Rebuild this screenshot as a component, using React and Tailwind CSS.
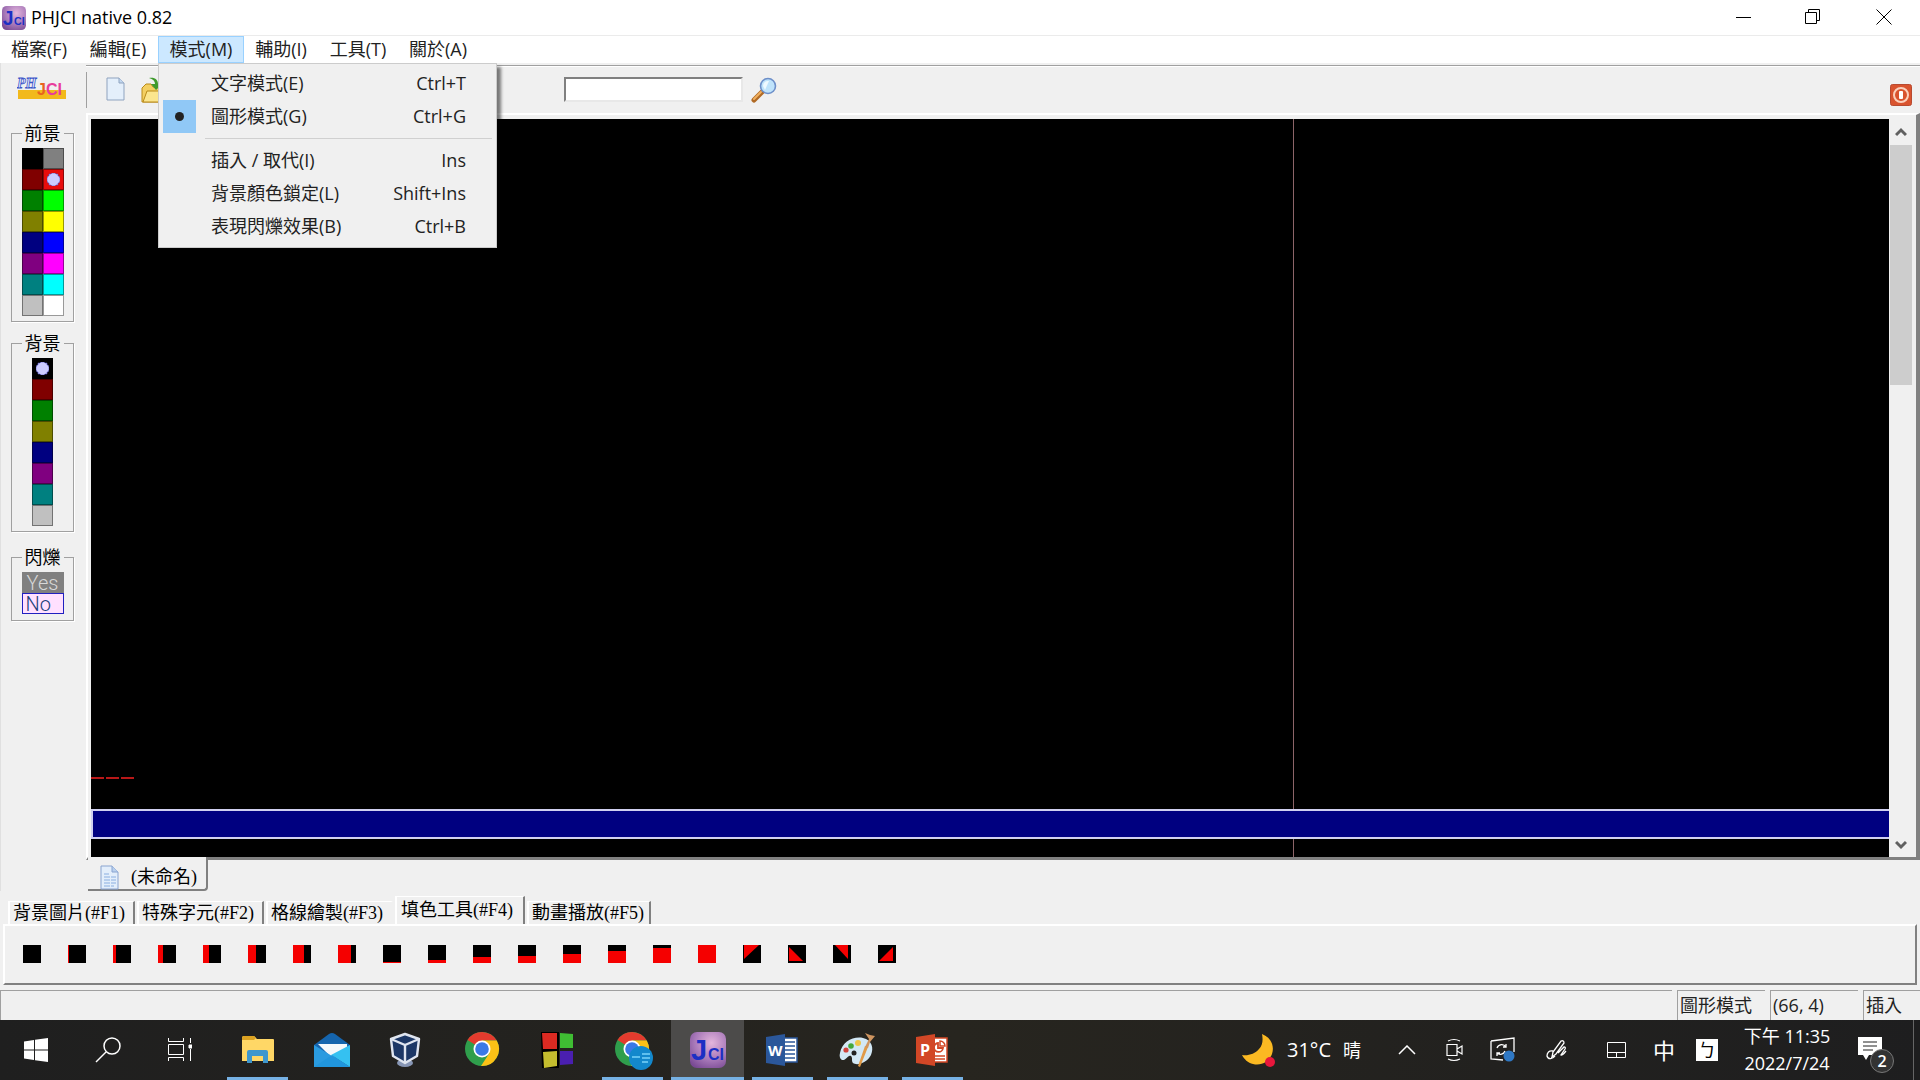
import { useState } from "react";

const MENUS = [
  { label: "檔案(F)", width: "w-[78px]" },
  { label: "編輯(E)", width: "w-20" },
  { label: "模式(M)", width: "w-[86px]" },
  { label: "輔助(I)", width: "w-[74px]" },
  { label: "工具(T)", width: "w-20" },
  { label: "關於(A)", width: "w-20" },
];

const MODE_ITEMS = [
  { label: "文字模式(E)", keys: "Ctrl+T" },
  { label: "圖形模式(G)", keys: "Ctrl+G", checked: true },
  null,
  { label: "插入 / 取代(I)", keys: "Ins" },
  { label: "背景顏色鎖定(L)", keys: "Shift+Ins" },
  { label: "表現閃爍效果(B)", keys: "Ctrl+B" },
];

const FOREGROUND = [
  "#000000", "#808080",
  "#800000", "#e80c0c",
  "#008000", "#00ff00",
  "#808000", "#ffff00",
  "#000080", "#0000ff",
  "#800080", "#ff00ff",
  "#008080", "#00ffff",
  "#c0c0c0", "#ffffff",
];

const BACKGROUND = [
  "#000000", "#800000", "#008000", "#808000",
  "#000080", "#800080", "#008080", "#c0c0c0",
];

// red area of every 18x18 fill block
const FILLS = [
  "",
  "M0 0h1v18h-1z",
  "M0 0h3v18h-3z",
  "M0 0h5v18h-5z",
  "M0 0h6v18h-6z",
  "M0 0h8v18h-8z",
  "M0 0h11v18h-11z",
  "M0 0h13v18h-13z",
  "M0 17h18v1h-18z",
  "M0 15h18v3h-18z",
  "M0 12h18v6h-18z",
  "M0 11h18v7h-18z",
  "M0 9h18v9h-18z",
  "M0 6h18v12h-18z",
  "M0 3h18v15h-18z",
  "M0 0h18v18h-18z",
  "M1 0H16L1 14z",
  "M1 2L15 16H1z",
  "M2 0H15V14z",
  "M15 2V16H1z",
];

const TABS = [
  { label: "背景圖片(#F1)", width: "w-[127px]" },
  { label: "特殊字元(#F2)", width: "w-[127px]" },
  { label: "格線繪製(#F3)", width: "w-[127px]" },
  { label: "填色工具(#F4)", width: "w-[130px]" },
  { label: "動畫播放(#F5)", width: "w-[124px]" },
];

const JciIcon = ({ size }) => (
  <svg width={size} height={size} viewBox="0 0 36 36" aria-hidden="true">
    <defs>
      <radialGradient id="jci" cx="0.6" cy="0.3" r="0.8">
        <stop offset="0" stopColor="#e3b5dc" />
        <stop offset="0.6" stopColor="#a778b8" />
        <stop offset="1" stopColor="#7a4a94" />
      </radialGradient>
    </defs>
    <rect width="36" height="36" rx="7" fill="url(#jci)" />
    <text x="1" y="28" fontFamily="Liberation Sans, sans-serif" fontWeight="700" fontSize="29" fill="#1c2fc4">J</text>
    <text x="18" y="28" fontFamily="Liberation Sans, sans-serif" fontWeight="700" fontSize="16" fill="#1c2fc4">CI</text>
  </svg>
);

const Logo = () => (
  <svg width="50" height="28" viewBox="0 0 50 28" role="img" aria-label="PHJCI">
    <rect x="1" y="15" width="48" height="9" fill="#f2b91c" />
    <text x="0" y="13" fontFamily="Liberation Serif, serif" fontStyle="italic" fontWeight="700" fontSize="14" fill="#eef2ff" stroke="#3b55c8" strokeWidth="0.8">PH</text>
    <text x="20" y="20" fontFamily="Liberation Sans, sans-serif" fontWeight="700" fontSize="16" fill="#e8641e">J</text>
    <text x="29" y="20" fontFamily="Liberation Sans, sans-serif" fontWeight="700" fontSize="16" fill="#e83c9c">CI</text>
  </svg>
);

const NewFileIcon = () => (
  <svg width="20" height="25" viewBox="0 0 20 25" aria-hidden="true">
    <path d="M1 1h12l5 5v17H1z" fill="#e4effb" stroke="#8fa3bf" />
    <path d="M13 1v5h5" fill="#c3d8f0" stroke="#8fa3bf" />
  </svg>
);

const OpenIcon = () => (
  <svg width="24" height="26" viewBox="0 0 24 26" aria-hidden="true">
    <path d="M2 11l4-4h5l2 3h8v15H2z" fill="#f3cf62" stroke="#b98a18" />
    <path d="M3 25l4-11h17l-3 11z" fill="#fbe58e" stroke="#b98a18" />
    <path d="M9 1c6-1 9 2 9 6h4l-6 6-5-6h4c0-3-2-5-6-6z" fill="#3f9a2c" />
  </svg>
);

const SearchIcon = () => (
  <svg width="26" height="26" viewBox="0 0 26 26" aria-hidden="true">
    <path d="M3 23l8-8" stroke="#b06a25" strokeWidth="5" strokeLinecap="round" />
    <path d="M3 22l7-7" stroke="#f0b060" strokeWidth="2" strokeLinecap="round" />
    <circle cx="17" cy="9" r="7.5" fill="#bfe3fb" stroke="#6d8fc9" strokeWidth="1.6" />
    <path d="M12 9a5 5 0 0 1 6-5l-4 9z" fill="#eef9ff" />
  </svg>
);

const DocIcon = () => (
  <svg width="20" height="25" viewBox="0 0 20 25" aria-hidden="true">
    <path d="M1 1h11l6 6v17H1z" fill="#e3eefb" stroke="#8aa4d0" />
    <path d="M12 1v6h6" fill="#b9d0ee" stroke="#8aa4d0" />
    <path d="M4 9h5M4 12h12M4 15h12M4 18h12M4 21h10" stroke="#8aaee0" strokeDasharray="6 1" />
  </svg>
);

const Marker = () => (
  <svg width="13" height="13" viewBox="0 0 13 13" className="mx-auto block" aria-hidden="true">
    <path
      d="M5 0h3l1 1h2v2h1l1 2v3l-1 2h-1v2H9l-1 1H5l-1-1H2v-2H1L0 8V5l1-2h1V1h2z"
      fill="#ccccff"
      stroke="#5050c0"
      strokeWidth="0.6"
    />
  </svg>
);

const Swatches = ({ colors, columns, value, onPick, name }) => (
  <div className={columns === 2 ? "grid grid-cols-2 w-[42px]" : "grid grid-cols-1 w-[21px]"}>
    {colors.map((color, index) => (
      <button
        type="button"
        key={color}
        aria-label={`${name} ${color}`}
        aria-pressed={value === index}
        onClick={() => onPick(index)}
        className="h-[21px] border border-black/40"
        style={{ backgroundColor: color }}
      >
        {value === index && <Marker />}
      </button>
    ))}
  </div>
);

const Group = ({ title, children, className }) => (
  <fieldset
    className={`mx-[10px] w-[63px] border border-[#a0a0a0] flex flex-col items-center shadow-[1px_1px_0_#fff] ${className}`}
  >
    <legend className="mx-auto px-[3px] text-lg leading-6">{title}</legend>
    {children}
  </fieldset>
);

const ModeMenu = () => (
  <ul
    role="menu"
    className="absolute left-0 top-[27px] z-10 w-[339px] border border-[#cccccc] bg-[#f0f0f0] pb-1 pl-1 pr-1 pt-[3px] shadow-[4px_4px_3px_rgba(0,0,0,0.5)]"
  >
    {MODE_ITEMS.map((item, index) =>
      item ? (
        <li key={item.label} role="none">
          <button type="button" role="menuitem" className="flex h-[33px] w-full items-center text-left">
            <span className={`flex size-[33px] items-center justify-center ${item.checked ? "bg-[#90c8f6]" : ""}`}>
              {item.checked && <span className="size-[9px] rounded-full bg-[#222]" />}
            </span>
            <span className="ml-[15px] flex-1 pb-0.5">{item.label}</span>
            <span className="pb-0.5 pr-[26px]">{item.keys}</span>
          </button>
        </li>
      ) : (
        <li key={index} role="separator" className="ml-[42px] flex h-[11px] items-center">
          <span className="h-px w-full bg-[#d0d0d0]" />
        </li>
      )
    )}
  </ul>
);

const TitleBar = () => (
  <header className="flex h-9 items-center border-b border-[#ebebeb] bg-white pl-0.5">
    <JciIcon size={24} />
    <h1 className="ml-[5px] flex-1 pb-0.5 text-lg leading-6">PHJCI native 0.82</h1>
    <button type="button" aria-label="最小化" className="flex h-full w-[69px] items-center justify-center">
      <svg width="16" height="16" stroke="#000" fill="none"><path d="M0 7.5h15" /></svg>
    </button>
    <button type="button" aria-label="還原" className="flex h-full w-[69px] items-center justify-center pb-0.5">
      <svg width="16" height="16" stroke="#000" fill="none">
        <path d="M0.5 3.5h11v11h-11zM3.5 3.5v-3h11v11h-3" />
      </svg>
    </button>
    <button type="button" aria-label="關閉" className="flex h-full w-[73px] items-center justify-center pb-0.5">
      <svg width="16" height="16" stroke="#000" fill="none"><path d="M0.5 0.5l15 15M15.5 0.5l-15 15" /></svg>
    </button>
  </header>
);

const ChromeIcon = ({ children }) => (
  <svg width="40" height="40" viewBox="0 0 40 40" aria-hidden="true">
    <circle cx="19" cy="19" r="17" fill="#2f9e4c" />
    <path d="M19 19L4.500 10A17 17 0 0 1 33.700 10.500H19z" fill="#e33b2e" />
    <path d="M19 10.500H33.700A17 17 0 0 1 18 36L26.500 23z" fill="#fbc116" />
    <circle cx="19" cy="19" r="8.500" fill="#fff" />
    <circle cx="19" cy="19" r="6.800" fill="#3a79e6" />
    {children}
  </svg>
);

const APPS = [
  {
    name: "檔案總管",
    open: true,
    icon: (
      <svg width="34" height="30" viewBox="0 0 34 30" aria-hidden="true">
        <path d="M1 3q0-2 2-2h10l3 3H32q1 0 1 1v21H1z" fill="#ffd766" />
        <path d="M1 3q0-2 2-2h10l2 2-2 2H1z" fill="#dda322" />
        <path d="M6 28V17q0-2 2-2h17q2 0 2 2v11h-5v-7H11v7z" fill="#3f97cd" />
      </svg>
    ),
  },
  {
    name: "郵件",
    icon: (
      <svg width="38" height="34" viewBox="0 0 38 34" aria-hidden="true">
        <path d="M0 12L15 1q3-2 6 0l15 11v10H0z" fill="#1565ae" />
        <path d="M4 11h29v10L18 25z" fill="#f4f8fb" />
        <path d="M0 12l36 22H0z" fill="#2a9be0" />
        <path d="M36 12v22L17 22z" fill="#35c1f1" />
        <path d="M0 34h36L18 22z" fill="#2196dd" />
      </svg>
    ),
  },
  {
    name: "VirtualBox",
    icon: (
      <svg width="38" height="36" viewBox="0 0 38 36" aria-hidden="true">
        <ellipse cx="16" cy="31" rx="8" ry="4" fill="#8796b5" />
        <path d="M2 7l14-5 14 5-2 17-12 7-12-7z" fill="#1c3766" stroke="#dfe5f0" strokeWidth="2.400" strokeLinejoin="round" />
        <path d="M2 7l14 6 14-6M16 13v18" fill="none" stroke="#dfe5f0" strokeWidth="2.400" />
      </svg>
    ),
  },
  { name: "Google Chrome", icon: <ChromeIcon /> },
  {
    name: "方塊",
    icon: (
      <svg width="34" height="36" viewBox="0 0 34 36" aria-hidden="true">
        <path d="M0 0h18v37H1z" fill="#000" />
        <path d="M1 1h15v16H2z" fill="#dc2a22" />
        <path d="M19 1l13 1v14H19z" fill="#3fbd33" />
        <path d="M2 20l14-1v15l-13 2z" fill="#c4bd2e" />
        <path d="M19 19h13v13l-13 1z" fill="#4a1fb0" />
      </svg>
    ),
  },
  {
    name: "Chrome 設定檔",
    open: true,
    icon: (
      <ChromeIcon>
        <circle cx="28" cy="28" r="12" fill="#1388cc" />
        <path d="M19 27h8M29 24h8M29 28h8M29 32h6" stroke="#5fc0ee" strokeWidth="2" />
      </ChromeIcon>
    ),
  },
  { name: "PHJCI", open: true, active: true, icon: <JciIcon size={36} /> },
  {
    name: "Word",
    open: true,
    icon: (
      <svg width="36" height="32" viewBox="0 0 36 32" aria-hidden="true">
        <path d="M18 4h14v24H18z" fill="#fff" stroke="#2b579a" strokeWidth="1.500" />
        <path d="M20 8h10M20 12h10M20 16h10M20 20h10M20 24h10" stroke="#2b579a" strokeWidth="1.500" />
        <path d="M1 3l19-3v32L1 29z" fill="#2b579a" />
        <text x="3" y="22" fontFamily="Open Sans, sans-serif" fontWeight="700" fontSize="15" fill="#fff">W</text>
      </svg>
    ),
  },
  {
    name: "小畫家",
    open: true,
    icon: (
      <svg width="38" height="36" viewBox="0 0 38 36" aria-hidden="true">
        <path d="M1 21C3 10 14 4 24 6c9 2 11 10 8 17-4 8-14 11-18 8-2-2 0-5-2-7-3-2-5 5-9 4-2-1-3-4-2-7z" fill="#d3e8f5" />
        <circle cx="7" cy="18" r="2.600" fill="#d0443c" />
        <circle cx="12" cy="14" r="2.800" fill="#44a83c" />
        <circle cx="19" cy="11" r="3" fill="#eec64a" />
        <circle cx="15" cy="21" r="2.500" fill="#222" />
        <path d="M19 34l7-20 3 1-8 20z" fill="#e09a48" />
        <path d="M26 15l4-8-4-6 5 2 5 1-5 6-2 6z" fill="#cf9560" />
      </svg>
    ),
  },
  {
    name: "PowerPoint",
    open: true,
    icon: (
      <svg width="36" height="32" viewBox="0 0 36 32" aria-hidden="true">
        <path d="M18 4h14v24H18z" fill="#fff" stroke="#d24726" strokeWidth="1.500" />
        <path d="M20 22h10M20 25h10" stroke="#d24726" strokeWidth="1.500" />
        <path d="M23 9a4.500 4.500 0 1 0 5 5h-5z" fill="none" stroke="#d24726" strokeWidth="1.800" />
        <path d="M25 7a5 5 0 0 1 5 5h-5z" fill="none" stroke="#d24726" strokeWidth="1.500" />
        <path d="M1 3l19-3v32L1 29z" fill="#d24726" />
        <text x="5" y="22" fontFamily="Open Sans, sans-serif" fontWeight="700" fontSize="16" fill="#fff">P</text>
      </svg>
    ),
  },
];

const TrayButton = ({ label, width, children }) => (
  <button type="button" aria-label={label} className={`flex h-full items-center justify-center ${width}`}>
    {children}
  </button>
);

const Taskbar = () => (
  <footer className="flex h-[60px] items-stretch bg-linear-to-r from-[#1f1f1f] via-[#27251f] to-[#1e1e1f] text-white">
    <TrayButton label="開始" width="w-[72px]">
      <svg width="24" height="24" viewBox="0 0 24 24" fill="#fff">
        <path d="M0 3.500l10-1.500v9.500H0zM11 1.800L24 0v11.500H11zM0 12.500h10V22L0 20.500zM11 12.500h13V24l-13-1.800z" />
      </svg>
    </TrayButton>
    <TrayButton label="搜尋" width="w-[72px]">
      <svg width="26" height="26" viewBox="0 0 26 26" fill="none" stroke="#fff" strokeWidth="1.500">
        <circle cx="17" cy="9" r="8" />
        <path d="M11 15L1 25" />
      </svg>
    </TrayButton>
    <TrayButton label="工作檢視" width="mr-1 w-[72px]">
      <svg width="24" height="24" viewBox="0 0 24 24" fill="none" stroke="#fff">
        <path d="M0.500 0v3.500h15V0M0.500 6.500h15v10h-15zM0.500 23v-3.500h15V23M22.500 0v5M22.500 11v12" />
        <path d="M21 7h3v3h-3z" fill="#fff" />
      </svg>
    </TrayButton>
    {APPS.map((app) => (
      <button
        type="button"
        key={app.name}
        aria-label={app.name}
        className={`mx-px flex w-[73px] flex-col items-center ${app.active ? "bg-[#4c4b4a]" : ""}`}
      >
        <span className="flex flex-1 items-center pt-[3px]">{app.icon}</span>
        <span className={`h-[3px] ${app.active ? "w-full" : "w-[61px]"} ${app.open ? "bg-[#76b1e4]" : ""}`} />
      </button>
    ))}

    {/* tray */}
    <div className="ml-auto flex items-center">
      <button type="button" className="flex items-center text-xl leading-6">
        <svg width="34" height="34" viewBox="0 0 34 34" aria-hidden="true">
          <path d="M21 1c8 3 13 11 10 20-3 8-11 12-19 10-5-1-9-5-11-9 6 1 13-1 17-6 4-4 4-10 3-15z" fill="#fbb922" />
          <circle cx="29" cy="29" r="5" fill="#e8173c" />
        </svg>
        <span className="ml-3">31°C</span>
        <span className="ml-3 text-lg">晴</span>
      </button>
      <TrayButton label="顯示隱藏的圖示" width="ml-[22px] w-12">
        <svg width="18" height="10" fill="none" stroke="#fff" strokeWidth="1.500"><path d="M1 9l8-8 8 8" /></svg>
      </TrayButton>
      <TrayButton label="視訊" width="w-12">
        <svg width="18" height="24" viewBox="0 0 18 24" fill="none" stroke="#fff" strokeWidth="1.200">
          <path d="M1 6.500h10v11H1zM11 11l5-3v8l-5-3M2 3q6-3 12 0M2 21q6 3 12 0" />
        </svg>
      </TrayButton>
      <TrayButton label="同步" width="w-12">
        <svg width="26" height="26" viewBox="0 0 26 26" fill="none" stroke="#fff" strokeWidth="1.300">
          <path d="M1 4l23-3v14M1 4v18l12 1" />
          <path d="M7 11a5 5 0 0 1 9-1M16 7v3h-3M15 14a5 5 0 0 1-8 2M7 19v-3h3" />
          <circle cx="19" cy="19" r="5.500" fill="#2f78c4" stroke="none" />
        </svg>
      </TrayButton>
      <TrayButton label="手寫筆" width="w-[60px]">
        <svg width="22" height="22" viewBox="0 0 22 22" fill="none" stroke="#fff" strokeWidth="1.300">
          <path d="M6 18l1-5L15 2q3-1 3 2L10 15l-4 3zM7 12c-4-1-6 2-6 5 1 4 6 3 8 0M12 14l6-6q2 0 1 2l-4 6q1 1 5-4" />
        </svg>
      </TrayButton>
      <TrayButton label="觸控板" width="w-[58px]">
        <svg width="19" height="16" fill="none" stroke="#fff"><path d="M0.500 0.500h18v15h-18zM0.500 10.500h18M9.500 10.500v5" /></svg>
      </TrayButton>
      <TrayButton label="輸入法" width="w-[38px]">
        <span className="text-[22px] leading-6">中</span>
      </TrayButton>
      <TrayButton label="注音" width="w-12">
        <span className="size-[22px] bg-white text-lg leading-[22px] text-black">ㄅ</span>
      </TrayButton>
      <time className="w-[112px] text-center text-lg leading-[27px]">
        下午 11:35
        <br />
        2022/7/24
      </time>
      <button type="button" aria-label="通知" className="relative ml-[15px] h-10 w-9">
        <svg width="24" height="24" viewBox="0 0 24 24" className="mt-[-2px]" aria-hidden="true">
          <path d="M0 0h24v18H11l-3 5-3-5H0z" fill="#fff" />
          <path d="M5 5h14M5 9h14M5 13h10" stroke="#222" />
        </svg>
        <span className="absolute bottom-[-3px] right-0 size-6 rounded-full border border-[#777] bg-[#333] text-base font-semibold leading-[22px]">
          2
        </span>
      </button>
      <span className="ml-[19px] mr-[6px] h-[60px] w-px bg-[#666]" />
    </div>
  </footer>
);

const App = () => {
  const [openMenu, setOpenMenu] = useState(2);
  const [foreground, setForeground] = useState(3);
  const [background, setBackground] = useState(0);
  const [blink, setBlink] = useState(false);
  const [tab, setTab] = useState(3);

  return (
    <div className="flex min-h-screen w-full flex-col bg-[#f0f0f0] font-['Open_Sans','Noto_Sans_CJK_TC',sans-serif] text-black">
      <TitleBar />

      {/* menu bar */}
      <nav className="flex h-[27px] bg-white text-lg leading-6 text-[#222]">
        {MENUS.map((menu, index) => (
          <div key={menu.label} className={`relative ${menu.width}`}>
            <button
              type="button"
              onClick={() => setOpenMenu(openMenu === index ? -1 : index)}
              className={`h-[27px] w-full whitespace-nowrap border pb-0.5 ${
                openMenu === index ? "border-[#99d1ff] bg-[#cce8ff]" : "border-transparent"
              }`}
            >
              {menu.label}
            </button>
            {index === 2 && openMenu === 2 && <ModeMenu />}
          </div>
        ))}
      </nav>

      <main className="flex flex-1">
        {/* color pickers */}
        <aside className="w-[86px] shrink-0 border-l border-[#e0e0e0] pt-3">
          <div className="mb-[18px] ml-4 h-7">
            <Logo />
          </div>
          <Group title="前景" className="h-[201px] pt-[3px]">
            <Swatches name="前景" colors={FOREGROUND} columns={2} value={foreground} onPick={setForeground} />
          </Group>
          <Group title="背景" className="mt-[9px] h-[201px] pt-[3px]">
            <Swatches name="背景" colors={BACKGROUND} columns={1} value={background} onPick={setBackground} />
          </Group>
          <Group title="閃爍" className="mt-[13px] h-[76px] pt-[3px]">
            <button
              type="button"
              onClick={() => setBlink(true)}
              aria-pressed={blink}
              className="h-[21px] w-[42px] bg-[#808080] font-['Roboto',sans-serif] text-xl font-light leading-5 text-[#d8d8d8]"
            >
              Yes
            </button>
            <button
              type="button"
              onClick={() => setBlink(false)}
              aria-pressed={!blink}
              className="h-[21px] w-[42px] border border-[#2020c0] bg-[#ffe0ff] pl-[3px] text-left font-['Roboto',sans-serif] text-xl font-light leading-5 text-[#20407a]"
            >
              No
            </button>
          </Group>
        </aside>

        <div className="flex min-w-0 flex-1 flex-col pt-0.5">
          {/* toolbar */}
          <div className="flex h-12 items-center border-t border-[#a0a0a0] shadow-[inset_0_1px_0_#fff]">
            <span className="h-9 w-px bg-[#a0a0a0]" />
            <button type="button" aria-label="開新檔案" className="ml-[19px]"><NewFileIcon /></button>
            <button type="button" aria-label="開啟" className="ml-[14px]"><OpenIcon /></button>
            <input
              aria-label="搜尋文字"
              className="ml-[400px] h-[25px] w-[179px] border-2 border-b-[#e8e8e8] border-l-[#808080] border-r-[#e8e8e8] border-t-[#808080] bg-white px-1"
            />
            <button type="button" aria-label="搜尋" className="ml-2"><SearchIcon /></button>
            <button type="button" aria-label="結束" className="ml-auto mr-[8px] mt-[10px]">
              <svg width="22" height="22" viewBox="0 0 22 22" aria-hidden="true">
                <rect x="0.500" y="0.500" width="21" height="21" rx="2" fill="#d9532e" stroke="#b84a30" />
                <circle cx="11" cy="11" r="7" fill="none" stroke="#fbd0bc" strokeWidth="2" />
                <rect x="9" y="7" width="4" height="8" rx="1" fill="#fff" />
              </svg>
            </button>
          </div>

          {/* editor page */}
          <div className="flex min-h-96 flex-1 border-b-[3px] border-l-2 border-r-4 border-t-2 border-b-[#808080] border-l-white border-r-[#808080] border-t-white pl-[3px] pt-1">
            <div className="relative flex flex-1 flex-col bg-black">
              <span className="absolute inset-y-0 left-[66.850%] w-px bg-[#8c6468]" />
              <div className="flex flex-1 items-end gap-0.5 pb-[30px]">
                <span className="h-0.5 w-[13px] bg-[#b81818]" />
                <span className="h-0.5 w-[13px] bg-[#b81818]" />
                <span className="h-0.5 w-[13px] bg-[#b81818]" />
              </div>
              <div className="z-[1] mb-[18px] h-[30px] border-y-2 border-l-2 border-[#d0d0f0] bg-[#000080]" />
            </div>
            <div className="flex w-[27px] flex-col items-center pr-[3px]">
              <button type="button" aria-label="向上捲動" className="flex h-[26px] items-center">
                <svg width="12" height="10" fill="none" stroke="#606060" strokeWidth="3"><path d="M1 8l5-5 5 5" /></svg>
              </button>
              <div className="flex-1 w-[22px]">
                <div className="h-60 bg-[#cdcdcd]" />
              </div>
              <button type="button" aria-label="向下捲動" className="flex h-6 items-center">
                <svg width="12" height="10" fill="none" stroke="#606060" strokeWidth="3"><path d="M1 2l5 5 5-5" /></svg>
              </button>
            </div>
          </div>

          {/* document tab */}
          <div className="ml-0.5 mt-[-3px] flex h-[34px]">
            <button
              type="button"
              className="flex w-[120px] items-center gap-[11px] rounded-br border-b-2 border-r-2 border-[#808080] bg-[#f0f0f0] pl-3 pt-2 font-['Liberation_Serif','Noto_Sans_CJK_TC',serif] text-lg leading-6"
            >
              <DocIcon />
              (未命名)
            </button>
          </div>
        </div>
      </main>

      {/* tool tabs */}
      <div role="tablist" className="mt-[5px] flex h-7 items-end pl-2 font-['Liberation_Serif','Noto_Sans_CJK_TC',serif] text-lg leading-5">
        {TABS.map((item, index) => (
          <button
            type="button"
            role="tab"
            key={item.label}
            aria-selected={tab === index}
            onClick={() => setTab(index)}
            className={`mr-0.5 whitespace-nowrap border-l-2 border-r-2 border-t border-l-white border-t-white text-left ${item.width} ${
              tab === index + 1 ? "border-r-transparent" : "border-r-[#808080]"
            } ${tab === index ? "h-7 pb-0.5 pl-1" : "h-[23px] pl-[3px]"}`}
          >
            {item.label}
          </button>
        ))}
      </div>
      <section className="ml-[3px] mr-[3px] flex h-[61px] items-center gap-[27px] border-b-2 border-l-2 border-r-2 border-t-2 border-b-[#808080] border-l-white border-r-[#808080] border-t-white pl-[18px] pb-0.5">
        {FILLS.map((path, index) => (
          <button type="button" key={index} aria-label={`填色 ${index + 1}`}>
            <svg width="18" height="18" className="block">
              <path d="M0 0h18v18H0z" fill="#000" />
              <path d={path} fill="#f50000" />
            </svg>
          </button>
        ))}
      </section>

      {/* status bar */}
      <div className="mt-[5px] flex h-[30px] gap-[5px] text-lg leading-7 text-[#222]">
        <span className="flex-1 border-l border-t border-[#a0a0a0]" />
        <span className="w-[88px] border-l border-t border-[#a0a0a0] pl-0.5">圖形模式</span>
        <span className="w-[88px] border-l border-t border-[#a0a0a0] pl-0.5">(66, 4)</span>
        <span className="w-[57px] border-l border-t border-[#a0a0a0] pl-0.5">插入</span>
      </div>

      <Taskbar />
    </div>
  );
};

export default App;
